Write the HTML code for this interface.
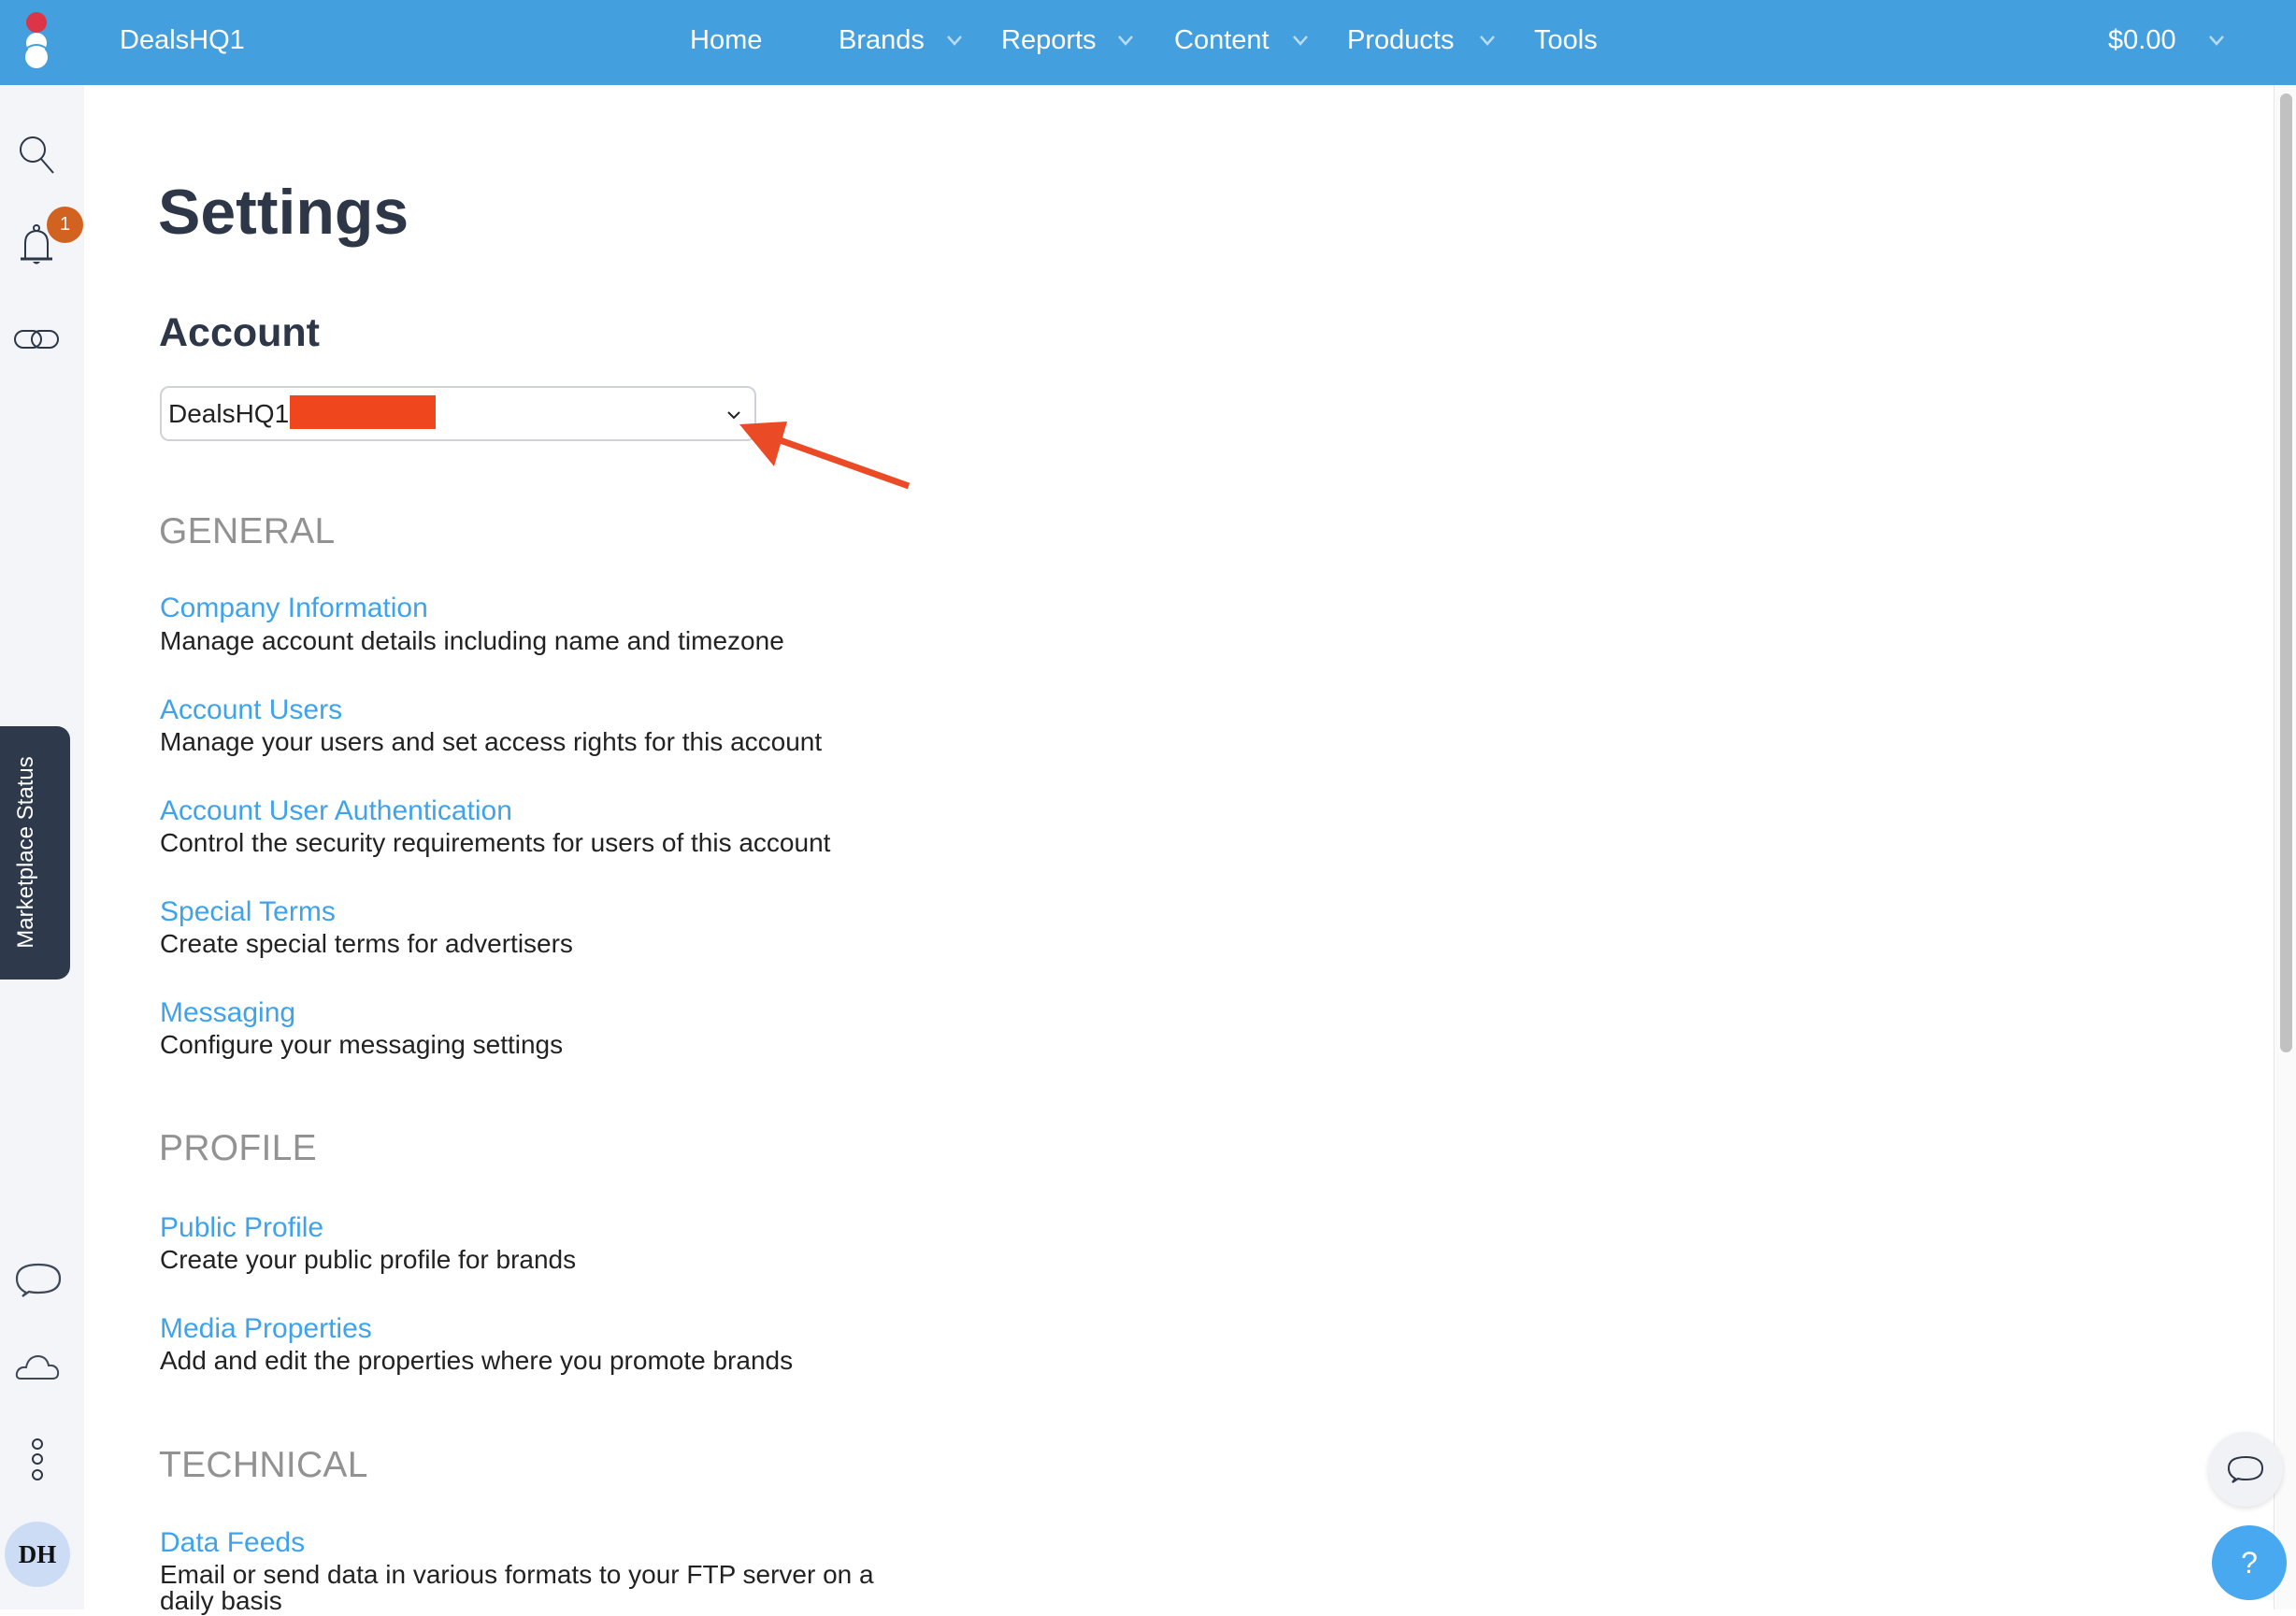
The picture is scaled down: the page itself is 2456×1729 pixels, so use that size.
<!DOCTYPE html>
<html><head><meta charset="utf-8">
<style>
*{margin:0;padding:0;box-sizing:border-box}
body{width:2456px;height:1722px;overflow:hidden;background:#fff;font-family:"Liberation Sans",Arial,sans-serif;position:relative}
.a{position:absolute;white-space:nowrap}
#hdr{left:0;top:0;width:2456px;height:91px;background:#449fdf}
.nav{color:#fff;font-size:29px;top:26px;line-height:34px}
.chev{top:30px}
#side{left:0;top:91px;width:90px;height:1631px;background:#f3f5f9}
.lnk{color:#3fa3ec;font-size:30px;line-height:34px;left:171px}
.dsc{color:#222;font-size:28px;line-height:32px;left:171px}
.sec{color:#929292;font-size:39px;line-height:46px;left:170px;letter-spacing:0.3px}
</style></head><body>
<div class="a" id="hdr"></div>
<svg class="a" style="left:22px;top:10px" width="36" height="66" viewBox="0 0 36 66">
<circle cx="17" cy="14" r="11" fill="#dc3548"/>
<circle cx="17" cy="36" r="11" fill="#fff"/>
<circle cx="17" cy="51" r="12" fill="#fff"/>
<path d="M6 42 Q17 34 28 42" stroke="#449fdf" stroke-width="2" fill="none"/>
</svg>
<div class="a nav" style="left:128px">DealsHQ1</div>
<div class="a nav" style="left:738px">Home</div>
<div class="a nav" style="left:897px">Brands</div>
<div class="a nav" style="left:1071px">Reports</div>
<div class="a nav" style="left:1256px">Content</div>
<div class="a nav" style="left:1441px">Products</div>
<div class="a nav" style="left:1641px">Tools</div>
<div class="a nav" style="left:2255px">$0.00</div>
<svg class="a chev" style="left:1011px" width="20" height="28"><path d="M3 9 L10 17 L17 9" stroke="#b9dcf5" stroke-width="2.5" fill="none"/></svg>
<svg class="a chev" style="left:1194px" width="20" height="28"><path d="M3 9 L10 17 L17 9" stroke="#b9dcf5" stroke-width="2.5" fill="none"/></svg>
<svg class="a chev" style="left:1381px" width="20" height="28"><path d="M3 9 L10 17 L17 9" stroke="#b9dcf5" stroke-width="2.5" fill="none"/></svg>
<svg class="a chev" style="left:1581px" width="20" height="28"><path d="M3 9 L10 17 L17 9" stroke="#b9dcf5" stroke-width="2.5" fill="none"/></svg>
<svg class="a chev" style="left:2361px" width="20" height="28"><path d="M3 9 L10 17 L17 9" stroke="#b9dcf5" stroke-width="2.5" fill="none"/></svg>

<div class="a" id="side"></div>
<svg class="a" style="left:18px;top:143px" width="44" height="44" viewBox="0 0 44 44"><circle cx="17" cy="17" r="13" stroke="#2d3748" stroke-width="2" fill="none"/><path d="M26 27 L39 42" stroke="#2d3748" stroke-width="2"/></svg>
<svg class="a" style="left:18px;top:238px" width="44" height="48" viewBox="0 0 44 48"><path d="M9 38 L9 22 Q9 10 21 9 Q33 10 33 22 L33 38" stroke="#2d3748" stroke-width="2" fill="none"/><circle cx="21" cy="6" r="3" stroke="#2d3748" stroke-width="2" fill="none"/><path d="M4 39 H38" stroke="#2d3748" stroke-width="3"/><path d="M17 42 Q21 47 25 42 Z" fill="#2d3748"/></svg>
<div class="a" style="left:50px;top:221px;width:39px;height:39px;border-radius:50%;background:#d2621f;color:#fff;font-size:20px;line-height:39px;text-align:center">1</div>
<svg class="a" style="left:14px;top:350px" width="52" height="26" viewBox="0 0 52 26"><rect x="2" y="4" width="28" height="18" rx="9" stroke="#2d3748" stroke-width="2" fill="none"/><rect x="20" y="4" width="28" height="18" rx="9" stroke="#2d3748" stroke-width="2" fill="none"/></svg>
<div class="a" style="left:0;top:777px;width:75px;height:271px;background:#2e3a4b;border-radius:0 14px 14px 0"></div>
<div class="a" style="top:912px;color:#fff;font-size:24px;line-height:28px;transform:translate(-50%,-50%) rotate(-90deg);left:28px">Marketplace Status</div>
<svg class="a" style="left:16px;top:1347px" width="50" height="44" viewBox="0 0 50 44"><path d="M12 36 Q2 31 2 21 Q2 6 25 6 Q48 6 48 21 Q48 36 25 36 Q19 36 15 35 L8 40 Z" stroke="#3d4858" stroke-width="2.2" fill="none"/></svg>
<svg class="a" style="left:16px;top:1444px" width="50" height="34" viewBox="0 0 50 34"><path d="M6 31 Q1 31 2 25 Q4 18 12 19 Q14 8 24 7 Q34 7 36 17 Q44 16 46 23 Q47 31 40 31 Z" stroke="#3d4858" stroke-width="2" fill="none"/></svg>
<svg class="a" style="left:30px;top:1537px" width="22" height="50" viewBox="0 0 22 50"><circle cx="10" cy="8" r="5" stroke="#2d3748" stroke-width="2" fill="none"/><circle cx="10" cy="24" r="5" stroke="#2d3748" stroke-width="2" fill="none"/><circle cx="10" cy="41" r="5" stroke="#2d3748" stroke-width="2" fill="none"/></svg>
<div class="a" style="left:5px;top:1628px;width:70px;height:70px;border-radius:50%;background:#cddcf5;color:#111;font-family:'Liberation Serif',serif;font-weight:bold;font-size:27px;line-height:70px;text-align:center">DH</div>

<div class="a" style="left:2432px;top:91px;width:24px;height:1631px;background:#fafafa;border-left:1px solid #e6e6e6"></div>
<div class="a" style="left:2439px;top:100px;width:13px;height:1026px;background:#c1c1c1;border-radius:7px"></div>

<div class="a" style="left:169px;top:187px;font-size:68px;line-height:80px;font-weight:bold;color:#2d3748">Settings</div>
<div class="a" style="left:170px;top:330px;font-size:43px;line-height:52px;font-weight:bold;color:#2d3748">Account</div>
<div class="a" style="left:171px;top:413px;width:638px;height:59px;border:2px solid #cfd3d8;border-radius:10px"></div>
<div class="a" style="left:180px;top:426px;font-size:28px;line-height:34px;color:#222">DealsHQ1</div>
<div class="a" style="left:310px;top:423px;width:156px;height:36px;background:#f0461e"></div>
<svg class="a" style="left:776px;top:436px" width="18" height="16"><path d="M3 5 L9 11 L15 5" stroke="#222" stroke-width="2" fill="none"/></svg>
<svg class="a" style="left:780px;top:440px" width="200" height="90" viewBox="780 440 200 90"><path d="M972 520 L826 468" stroke="#ea4a25" stroke-width="7"/><path d="M791 454 L842 451 L828 499 Z" fill="#ea4a25"/></svg>

<div class="a sec" style="top:546px">GENERAL</div>
<div class="a lnk" style="top:634px">Company Information</div>
<div class="a dsc" style="top:670px">Manage account details including name and timezone</div>
<div class="a lnk" style="top:743px">Account Users</div>
<div class="a dsc" style="top:778px">Manage your users and set access rights for this account</div>
<div class="a lnk" style="top:851px">Account User Authentication</div>
<div class="a dsc" style="top:886px">Control the security requirements for users of this account</div>
<div class="a lnk" style="top:959px">Special Terms</div>
<div class="a dsc" style="top:994px">Create special terms for advertisers</div>
<div class="a lnk" style="top:1067px">Messaging</div>
<div class="a dsc" style="top:1102px">Configure your messaging settings</div>

<div class="a sec" style="top:1206px">PROFILE</div>
<div class="a lnk" style="top:1297px">Public Profile</div>
<div class="a dsc" style="top:1332px">Create your public profile for brands</div>
<div class="a lnk" style="top:1405px">Media Properties</div>
<div class="a dsc" style="top:1440px">Add and edit the properties where you promote brands</div>

<div class="a sec" style="top:1545px">TECHNICAL</div>
<div class="a lnk" style="top:1634px">Data Feeds</div>
<div class="a dsc" style="top:1669px">Email or send data in various formats to your FTP server on a</div>
<div class="a dsc" style="top:1697px">daily basis</div>

<div class="a" style="left:2362px;top:1532px;width:80px;height:80px;border-radius:50%;background:#f0f2f5;box-shadow:0 2px 6px rgba(0,0,0,0.12)"></div>
<svg class="a" style="left:2382px;top:1555px" width="40" height="34" viewBox="0 0 40 34"><path d="M9 27 Q2 23 2 16 Q2 4 20 4 Q38 4 38 16 Q38 28 20 28 Q15 28 12 27 L6 31 Z" stroke="#2d3748" stroke-width="2" fill="none"/></svg>
<div class="a" style="left:2366px;top:1632px;width:80px;height:80px;border-radius:50%;background:#48a8f0;color:#fff;font-size:32px;line-height:80px;text-align:center">?</div>
</body></html>
